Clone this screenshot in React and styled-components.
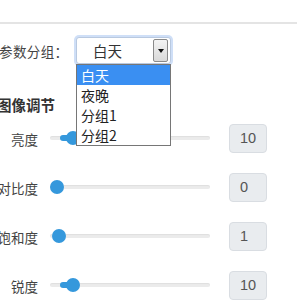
import React from "react";
import styled, { createGlobalStyle } from "styled-components";

const GlobalStyle = createGlobalStyle`
  body {
    margin: 0;
    background: #fff;
    overflow: hidden;
    font-family: "Noto Sans CJK SC", "Liberation Sans", sans-serif;
  }
`;

const Page = styled.div`
  width: 300px;
  height: 300px;
  overflow: hidden;
  padding-top: 22px;
  box-sizing: border-box;
`;

const Rule = styled.div`
  width: 297px;
  height: 2px;
  background: #e4e4e4;
`;

const GroupRow = styled.div`
  display: flex;
  align-items: center;
  margin-top: 12px;
  height: 29px;
`;

const GroupLabel = styled.span`
  width: 77px;
  margin-left: -1px;
  font-size: 13.5px;
  color: #444;
  letter-spacing: 0.4px;
`;

const SelectWrap = styled.div`
  position: relative;
  width: 95px;
  height: 27px;
`;

const SelectBox = styled.div`
  display: flex;
  align-items: center;
  justify-content: space-between;
  height: 100%;
  box-sizing: border-box;
  border: 1px solid #b9c9e0;
  border-radius: 3px;
  box-shadow: 0 0 0 2px #cfdff7;
  background: #fff;
  padding: 0 2px 0 16px;
  font-size: 14.5px;
  color: #333;
`;

const ArrowButton = styled.div`
  width: 15px;
  height: 23px;
  box-sizing: border-box;
  border: 1px solid #8a8a8a;
  border-radius: 2px;
  background: linear-gradient(#f4f4f4, #d9d9d9);
  display: flex;
  align-items: center;
  justify-content: center;
  &::after {
    content: "";
    border-left: 3.5px solid transparent;
    border-right: 3.5px solid transparent;
    border-top: 4px solid #111;
  }
`;

const OptionList = styled.ul`
  position: absolute;
  top: 27px;
  left: 0;
  width: 95px;
  margin: 0;
  padding: 0;
  list-style: none;
  box-sizing: border-box;
  background: #fff;
  border: 1px solid #767676;
  z-index: 5;
`;

const Option = styled.li`
  height: 20px;
  line-height: 20px;
  padding-left: 4px;
  font-size: 14px;
  color: ${(p) => (p.$active ? "#fff" : "#222")};
  background: ${(p) => (p.$active ? "#3a8ff2" : "transparent")};
`;

const Heading = styled.h3`
  margin: 30px 0 0 -3px;
  font-size: 14.5px;
  font-weight: 700;
  color: #333;
  line-height: 20px;
`;

const Params = styled.div`
  display: grid;
  row-gap: 20px;
  margin-top: 9px;
`;

const ParamRow = styled.div`
  display: grid;
  grid-template-columns: 38px 160px 45px;
  column-gap: 12px;
  align-items: center;
  height: 29px;
  & > :last-child {
    margin-left: 7px;
  }
`;

const ParamLabel = styled.span`
  text-align: right;
  white-space: nowrap;
  font-size: 13.5px;
  color: #444;
  direction: rtl;
`;

const Slider = styled.div`
  position: relative;
  height: 4px;
  border-radius: 2px;
  background: #ebebeb;
  box-shadow: inset 0 1px 1px rgba(0, 0, 0, 0.05);
  margin-top: -2px;
`;

const Fill = styled.div`
  position: absolute;
  left: 10px;
  top: -1px;
  height: 6px;
  border-radius: 3px;
  background: #3598dc;
`;

const Thumb = styled.div`
  position: absolute;
  top: -5px;
  width: 14px;
  height: 14px;
  margin-left: -7px;
  border-radius: 50%;
  background: #3598dc;
`;

const ValueBox = styled.div`
  height: 29px;
  box-sizing: border-box;
  border: 1px solid #d9dde2;
  border-radius: 4px;
  background: #e9ecef;
  padding-left: 10px;
  line-height: 27px;
  font-family: "Liberation Sans", sans-serif;
  font-size: 14.5px;
  color: #555;
`;

const params = [
  { label: "亮度", value: 10 },
  { label: "对比度", value: 0 },
  { label: "饱和度", value: 1 },
  { label: "锐度", value: 10 },
];

function Param({ label, value }) {
  const center = 7 + value * 1.6;
  return (
    <ParamRow>
      <ParamLabel>{label}</ParamLabel>
      <Slider>
        {value > 2 && <Fill style={{ width: center - 10 }} />}
        <Thumb style={{ left: center }} />
      </Slider>
      <ValueBox>{value}</ValueBox>
    </ParamRow>
  );
}

export default function App() {
  return (
    <Page>
      <GlobalStyle />
      <Rule />
      <GroupRow>
        <GroupLabel>参数分组：</GroupLabel>
        <SelectWrap>
          <SelectBox>
            白天
            <ArrowButton />
          </SelectBox>
          <OptionList>
            <Option $active>白天</Option>
            <Option>夜晚</Option>
            <Option>分组1</Option>
            <Option>分组2</Option>
          </OptionList>
        </SelectWrap>
      </GroupRow>
      <Heading>图像调节</Heading>
      <Params>
        {params.map((p) => (
          <Param key={p.label} {...p} />
        ))}
      </Params>
    </Page>
  );
}
